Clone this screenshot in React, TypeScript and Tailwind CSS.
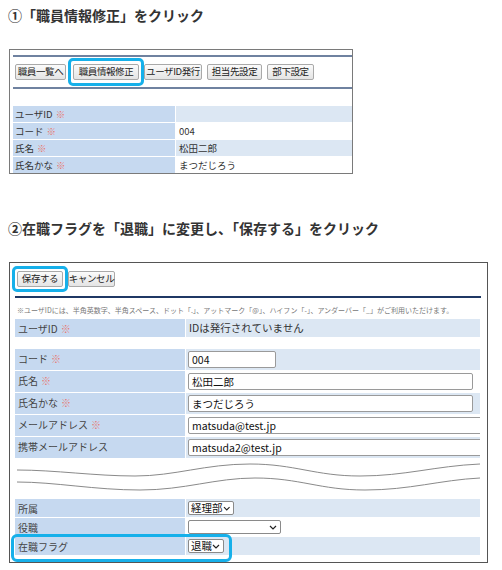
import React from 'react';

const jp = "font-['Noto_Sans_CJK_JP','Liberation_Sans',sans-serif]";

function Btn({ children, className = '' }: { children: React.ReactNode; className?: string }) {
  return (
    <span
      className={`inline-flex h-[16px] shrink-0 items-center justify-center whitespace-nowrap rounded-[2px] border border-[#a9a9a9] bg-gradient-to-b from-[#fbfbfb] to-[#e4e4e4] text-[9.5px] leading-none tracking-[-0.4px] text-[#222] ${className}`}
    >
      {children}
    </span>
  );
}

const Req = () => <span className="ml-[3px] text-[#e8776f]">※</span>;

function SmallRow({ label, value, light }: { label: string; value?: string; light: boolean }) {
  return (
    <div className="flex h-[16px]">
      <div className="flex w-[162px] items-center bg-[#c6d9f0] pl-[2px] text-[9.5px] text-[#333]">
        {label}
        <Req />
      </div>
      <div
        className={`ml-px flex flex-1 items-center pl-[3px] text-[9.5px] text-[#333] ${light ? 'bg-[#dce7f3]' : 'bg-white'}`}
      >
        {value}
      </div>
    </div>
  );
}

function Row({
  label,
  req,
  light,
  h = 'h-[21px]',
  children,
}: {
  label: string;
  req?: boolean;
  light: boolean;
  h?: string;
  children?: React.ReactNode;
}) {
  return (
    <div className={`flex ${h}`}>
      <div className="flex w-[170px] shrink-0 items-start whitespace-nowrap bg-[#c6d9f0] pl-[3px] pt-[2px] text-[10px] leading-[15px] text-[#444]">
        {label}
        {req && <Req />}
      </div>
      <div className={`ml-px flex flex-1 items-center pl-[2px] ${light ? 'bg-[#dce7f3]' : 'bg-white'}`}>
        {children}
      </div>
    </div>
  );
}

function Input({ value, w }: { value: string; w: string }) {
  return (
    <div
      className={`flex h-[17px] shrink-0 items-center whitespace-nowrap rounded-[2px] border border-[#9a9a9a] bg-white pl-[3px] text-[10.5px] text-[#111] ${w}`}
    >
      {value}
    </div>
  );
}

function Select({ value, w }: { value: string; w: string }) {
  return (
    <div
      className={`flex h-[14px] shrink-0 items-center justify-between whitespace-nowrap rounded-[2px] border border-[#8a8a8a] bg-white pl-[2px] pr-[3px] text-[10.5px] leading-none text-[#111] ${w}`}
    >
      <span>{value}</span>
      <svg width="8" height="5" viewBox="0 0 8 5">
        <path d="M1 1 L4 4 L7 1" fill="none" stroke="#222" strokeWidth="1.2" />
      </svg>
    </div>
  );
}

export default function App() {
  return (
    <div className={`h-[570px] w-[502px] overflow-hidden bg-white ${jp}`}>
      <h2 className="ml-[8px] pt-[5px] text-[14px] font-bold leading-[20px] text-[#333]">
        ①「職員情報修正」をクリック
      </h2>

      {/* screenshot 1 */}
      <div className="ml-[9px] mt-[24px] h-[125px] w-[344px] overflow-hidden border border-[#7a7a7a] pl-[3px]">
        <div className="mt-[5px] h-[2px] bg-[#6f82a0]" />
        <div className="mt-[1px] flex items-center">
          <Btn className="ml-[2px] w-[51px]">職員一覧へ</Btn>
          <span className="ml-[2px] inline-flex shrink-0 rounded-[5px] border-[3px] border-[#16b0ea] px-[2px] py-[3px]">
            <Btn className="w-[66px]">職員情報修正</Btn>
          </span>
          <Btn className="w-[58px]">ユーザID発行</Btn>
          <Btn className="ml-[5px] w-[55px]">担当先設定</Btn>
          <Btn className="ml-[5px] w-[47px]">部下設定</Btn>
        </div>
        <div className="mt-[1px] h-[2px] bg-[#6f82a0]" />
        <div className="mt-[17px] flex flex-col gap-px">
          <SmallRow label="ユーザID" light />
          <SmallRow label="コード" value="004" light={false} />
          <SmallRow label="氏名" value="松田二郎" light />
          <SmallRow label="氏名かな" value="まつだじろう" light={false} />
        </div>
      </div>

      <h2 className="ml-[8px] mt-[44px] text-[14px] font-bold leading-[20px] text-[#333]">
        ②在職フラグを「退職」に変更し、「保存する」をクリック
      </h2>

      {/* screenshot 2 */}
      <div className="relative ml-[9px] mt-[24px] h-[301px] w-[479px] overflow-hidden border border-[#555]">
        <div className="ml-[2px] mt-[3px] flex items-center">
          <span className="inline-flex shrink-0 rounded-[5px] border-[3px] border-[#16b0ea] px-[2px] py-[2px]">
            <Btn className="w-[46px]">保存する</Btn>
          </span>
          <Btn className="w-[47px]">キャンセル</Btn>
        </div>
        <div className="ml-[5px] mr-[6px] mt-[4px] h-[2px] bg-[#1f3864]" />
        <p className="ml-[7px] mt-[7px] whitespace-nowrap text-[7px] leading-[10px] text-[#777]">
          ※ユーザIDには、半角英数字、半角スペース、ドット「.」、アットマーク「@」、ハイフン「-」、アンダーバー「_」がご利用いただけます。
        </p>

        <div className="ml-[5px] mr-[7px] mt-[4px] overflow-hidden">
          <Row label="ユーザID" req light h="h-[18px]">
            <span className="pl-[1px] text-[10.5px] text-[#333]">IDは発行されていません</span>
          </Row>
          <div className="mt-[12px] flex flex-col gap-px">
            <Row label="コード" req light>
              <Input value="004" w="w-[88px]" />
            </Row>
            <Row label="氏名" req light={false}>
              <Input value="松田二郎" w="w-[285px]" />
            </Row>
            <Row label="氏名かな" req light>
              <Input value="まつだじろう" w="w-[285px]" />
            </Row>
            <Row label="メールアドレス" req light={false}>
              <Input value="matsuda@test.jp" w="w-[300px]" />
            </Row>
            <Row label="携帯メールアドレス" light>
              <Input value="matsuda2@test.jp" w="w-[300px]" />
            </Row>
          </div>

          <svg className="mt-[4px] block" width="465" height="34" viewBox="0 0 465 34">
            <path
              d="M2 8 C 40 8, 80 14, 120 14 C 160 14, 190 2, 235 2 C 280 2, 300 14, 345 14 C 390 14, 420 4, 465 2"
              fill="none"
              stroke="#8a8a8a"
              strokeWidth="1"
            />
            <path
              d="M2 20 C 40 20, 80 28, 125 28 C 170 28, 200 16, 240 16 C 285 16, 305 28, 350 28 C 395 28, 425 18, 465 16"
              fill="none"
              stroke="#8a8a8a"
              strokeWidth="1"
            />
          </svg>

          <div className="mt-[3px] flex flex-col gap-px">
            <Row label="所属" light h="h-[18px]">
              <Select value="経理部" w="w-[46px]" />
            </Row>
            <Row label="役職" light={false} h="h-[18px]">
              <Select value="" w="w-[93px]" />
            </Row>
            <Row label="在職フラグ" light h="h-[18px]">
              <Select value="退職" w="w-[36px]" />
            </Row>
          </div>
        </div>

        {/* highlight over the 在職フラグ row */}
        <div className="absolute left-[1px] top-[271px] h-[28px] w-[221px] rounded-[6px] border-[3px] border-[#16b0ea]" />
      </div>
    </div>
  );
}
